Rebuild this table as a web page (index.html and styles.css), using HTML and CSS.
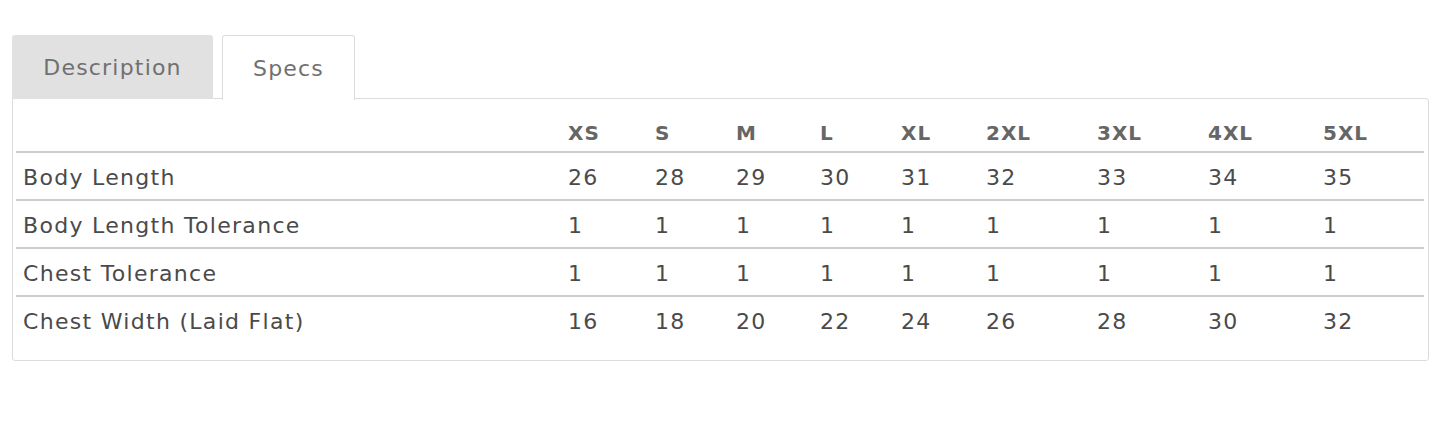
FILE: index.html
```html
<!DOCTYPE html>
<html lang="en">
<head>
  <meta charset="UTF-8">
  <title>Product Specs</title>
  <link rel="stylesheet" href="styles.css">
</head>
<body>

<div class="product-tabs">
  <ul class="tab-list">
    <li class="tab">Description</li>
    <li class="tab active">Specs</li>
  </ul>

  <!-- Specs panel -->
  <div class="tab-panel">
    <table class="size-table">
      <colgroup>
        <col class="c-label">
        <col style="width:87px"><col style="width:81px"><col style="width:84px">
        <col style="width:81px"><col style="width:85px"><col style="width:111px">
        <col style="width:111px"><col style="width:115px"><col>
      </colgroup>
      <thead>
        <tr><th></th><th>XS</th><th>S</th><th>M</th><th>L</th><th>XL</th><th>2XL</th><th>3XL</th><th>4XL</th><th>5XL</th></tr>
      </thead>
      <tbody>
        <tr><td>Body Length</td><td>26</td><td>28</td><td>29</td><td>30</td><td>31</td><td>32</td><td>33</td><td>34</td><td>35</td></tr>
        <tr><td>Body Length Tolerance</td><td>1</td><td>1</td><td>1</td><td>1</td><td>1</td><td>1</td><td>1</td><td>1</td><td>1</td></tr>
        <tr><td>Chest Tolerance</td><td>1</td><td>1</td><td>1</td><td>1</td><td>1</td><td>1</td><td>1</td><td>1</td><td>1</td></tr>
        <tr><td>Chest Width (Laid Flat)</td><td>16</td><td>18</td><td>20</td><td>22</td><td>24</td><td>26</td><td>28</td><td>30</td><td>32</td></tr>
      </tbody>
    </table>
  </div>
</div>

</body>
</html>
```

FILE: styles.css
```css
* { box-sizing: border-box; margin: 0; padding: 0; }
body { font-family: 'DejaVu Sans', sans-serif; background: #fff; color: #4a4a4a; }

.product-tabs { padding: 35px 16px 0 12px; }

.tab-list { list-style: none; display: flex; gap: 9px; height: 64px; }
.tab {
  height: 64px; line-height: 66px; text-align: center;
  font-size: 22px; letter-spacing: 1.2px; color: #707070; border-radius: 3px 3px 0 0;
}
.tab:first-child { width: 201px; background: #e1e1e1; }
.tab.active {
  width: 133px; background: #fff; position: relative; z-index: 1;
  border: 1px solid #dcdcdc; border-bottom: none; height: 65px;
}

.tab-panel {
  border: 1px solid #dcdcdc; border-radius: 0 3px 3px 3px;
  padding: 5px 4px 16px 3px; margin-top: -1px;
}

.size-table { width: 100%; border-collapse: collapse; table-layout: fixed; }
.c-label { width: 545px; }
.size-table th, .size-table td { text-align: left; padding: 0 0 0 7px; }
.size-table th {
  height: 48px; vertical-align: bottom; padding-bottom: 6px;
  font-size: 20px; letter-spacing: 1px; font-weight: 600; color: #666;
  border-bottom: 2px solid #ccc;
}
.size-table td {
  height: 48px; padding-top: 2px;
  font-size: 22px; letter-spacing: 1.3px; color: #4a4a4a;
}
.size-table tbody tr { border-bottom: 2px solid #ccc; }
.size-table tbody tr:last-child { border-bottom: none; }
```
